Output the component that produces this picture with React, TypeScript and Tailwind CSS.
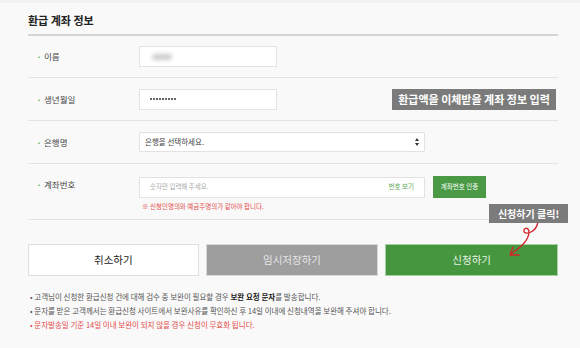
import React from 'react';

const font = { fontFamily: '"Noto Sans CJK KR", "Noto Sans", sans-serif' };

function Label({ text }: { text: string }) {
    return (
        <div className="w-[111px] pl-[10px] flex items-center gap-[4px] text-[8.5px] text-[#444]">
            <span className="text-[#5aa852] text-[6px]">•</span>
            <span>{text}</span>
        </div>
    );
}

export default function App() {
    return (
        <div style={font} className="w-[580px] h-[348px] bg-[#f9f9f9] relative overflow-hidden border-t-[3px] border-[#f1f1f1]">
            <div className="ml-[28px] w-[530px]">
                <h2 className="pt-[8px] h-[31px] text-[11px] font-bold text-[#222] leading-[18px]">환급 계좌 정보</h2>
                <div className="border-t-2 border-[#d4d4d4]">

                    {/* 이름 */}
                    <div className="h-[42px] flex items-center border-b border-[#e4e4e4]">
                        <Label text="이름" />
                        <div className="w-[138px] h-[21px] bg-white border border-[#e2e2e2] flex items-center pl-[12px]">
                            <span className="w-[20px] h-[6px] rounded-full bg-[#ccc] blur-[2px]"></span>
                        </div>
                    </div>

                    {/* 생년월일 */}
                    <div className="h-[43px] flex items-center border-b border-[#e4e4e4] relative">
                        <Label text="생년월일" />
                        <div className="w-[138px] h-[21px] bg-white border border-[#e2e2e2] flex items-center pl-[10px] gap-[1px]">
                            {Array.from({ length: 9 }).map((_, i) => (
                                <span key={i} className="w-[2px] h-[2px] rounded-full bg-[#333]"></span>
                            ))}
                        </div>
                        <div className="absolute left-[364px] top-[11px] w-[164px] h-[21px] bg-[#7b7b7b] text-white text-[11px] font-bold flex items-center justify-center">
                            환급액을 이체받을 계좌 정보 입력
                        </div>
                    </div>

                    {/* 은행명 */}
                    <div className="h-[43px] flex items-center border-b border-[#e4e4e4]">
                        <Label text="은행명" />
                        <div className="w-[286px] h-[20px] bg-white border border-[#e2e2e2] rounded-[2px] flex items-center justify-between pl-[5px] pr-[5px] text-[7.5px] text-[#444]">
                            <span>은행을 선택하세요.</span>
                            <svg width="4" height="8" viewBox="0 0 4 8">
                                <path d="M0 3 L2 0 L4 3 Z M0 5 L2 8 L4 5 Z" fill="#333" />
                            </svg>
                        </div>
                    </div>

                    {/* 계좌번호 */}
                    <div className="h-[56px] flex items-start border-b border-[#e4e4e4] relative">
                        <div className="pt-[14px]"><Label text="계좌번호" /></div>
                        <div className="pt-[12px] flex flex-col">
                            <div className="flex items-center gap-[8px]">
                                <div className="w-[286px] h-[21px] bg-white border border-[#e2e2e2] flex items-center justify-between pl-[10px] pr-[10px] text-[6.5px]">
                                    <span className="text-[#aaa]">숫자만 입력해 주세요.</span>
                                    <span className="text-[#5aa852]">번호 보기</span>
                                </div>
                                <div className="w-[53px] h-[22px] bg-[#4a9a45] text-white text-[6.5px] flex items-center justify-center">
                                    계좌번호 인증
                                </div>
                            </div>
                            <div className="mt-[4px] pl-[3px] text-[6.5px] text-[#e54b4b]">※ 신청인명의와 예금주명의가 같아야 합니다.</div>
                        </div>
                        <div className="absolute left-[461px] top-[40px] w-[79px] h-[19px] bg-[#7b7b7b] text-white text-[10px] font-bold flex items-center justify-center z-10">
                            신청하기 클릭!
                        </div>
                    </div>
                </div>

                {/* Buttons */}
                <div className="mt-[24px] flex gap-[7px]">
                    <div className="w-[171px] h-[32px] bg-white border border-[#e0e0e0] flex items-center justify-center text-[10.5px] text-[#222]">취소하기</div>
                    <div className="w-[173px] h-[32px] bg-[#9e9e9e] border border-[#d8d8d8] flex items-center justify-center text-[10.5px] text-[#e6e6e6]">임시저장하기</div>
                    <div className="w-[173px] h-[32px] bg-[#45963f] border border-[#a9cfa5] flex items-center justify-center text-[10.5px] text-[#e8f3e6]">신청하기</div>
                </div>

                {/* Notes */}
                <div className="mt-[14px] pl-[2px] text-[7.5px] leading-[14px] text-[#555]">
                    <p>• 고객님이 신청한 환급신청 건에 대해 검수 중 보완이 필요할 경우 <b className="text-[#222]">보완 요청 문자</b>를 발송합니다.</p>
                    <p>• 문자를 받은 고객께서는 환급신청 사이트에서 보완사유를 확인하신 후 14일 이내에 신청내역을 보완해 주셔야 합니다.</p>
                    <p className="text-[#e54b4b]">• 문자발송일 기준 14일 이내 보완이 되지 않을 경우 신청이 무효화 됩니다.</p>
                </div>
            </div>

            {/* red arrow */}
            <svg className="absolute left-0 top-0 pointer-events-none" width="580" height="348" viewBox="0 0 580 348">
                <path d="M538 219 C537 224 535 227 531 229 C527 231 523 230 524 227 C525 224 529 225 529 229 C529 235 523 243 511 251" fill="none" stroke="#d6202a" strokeWidth="1.3" strokeLinecap="round" />
                <path d="M513 244 L510 252 L519 252" fill="none" stroke="#d6202a" strokeWidth="1.3" strokeLinecap="round" strokeLinejoin="round" />
            </svg>
        </div>
    );
}
